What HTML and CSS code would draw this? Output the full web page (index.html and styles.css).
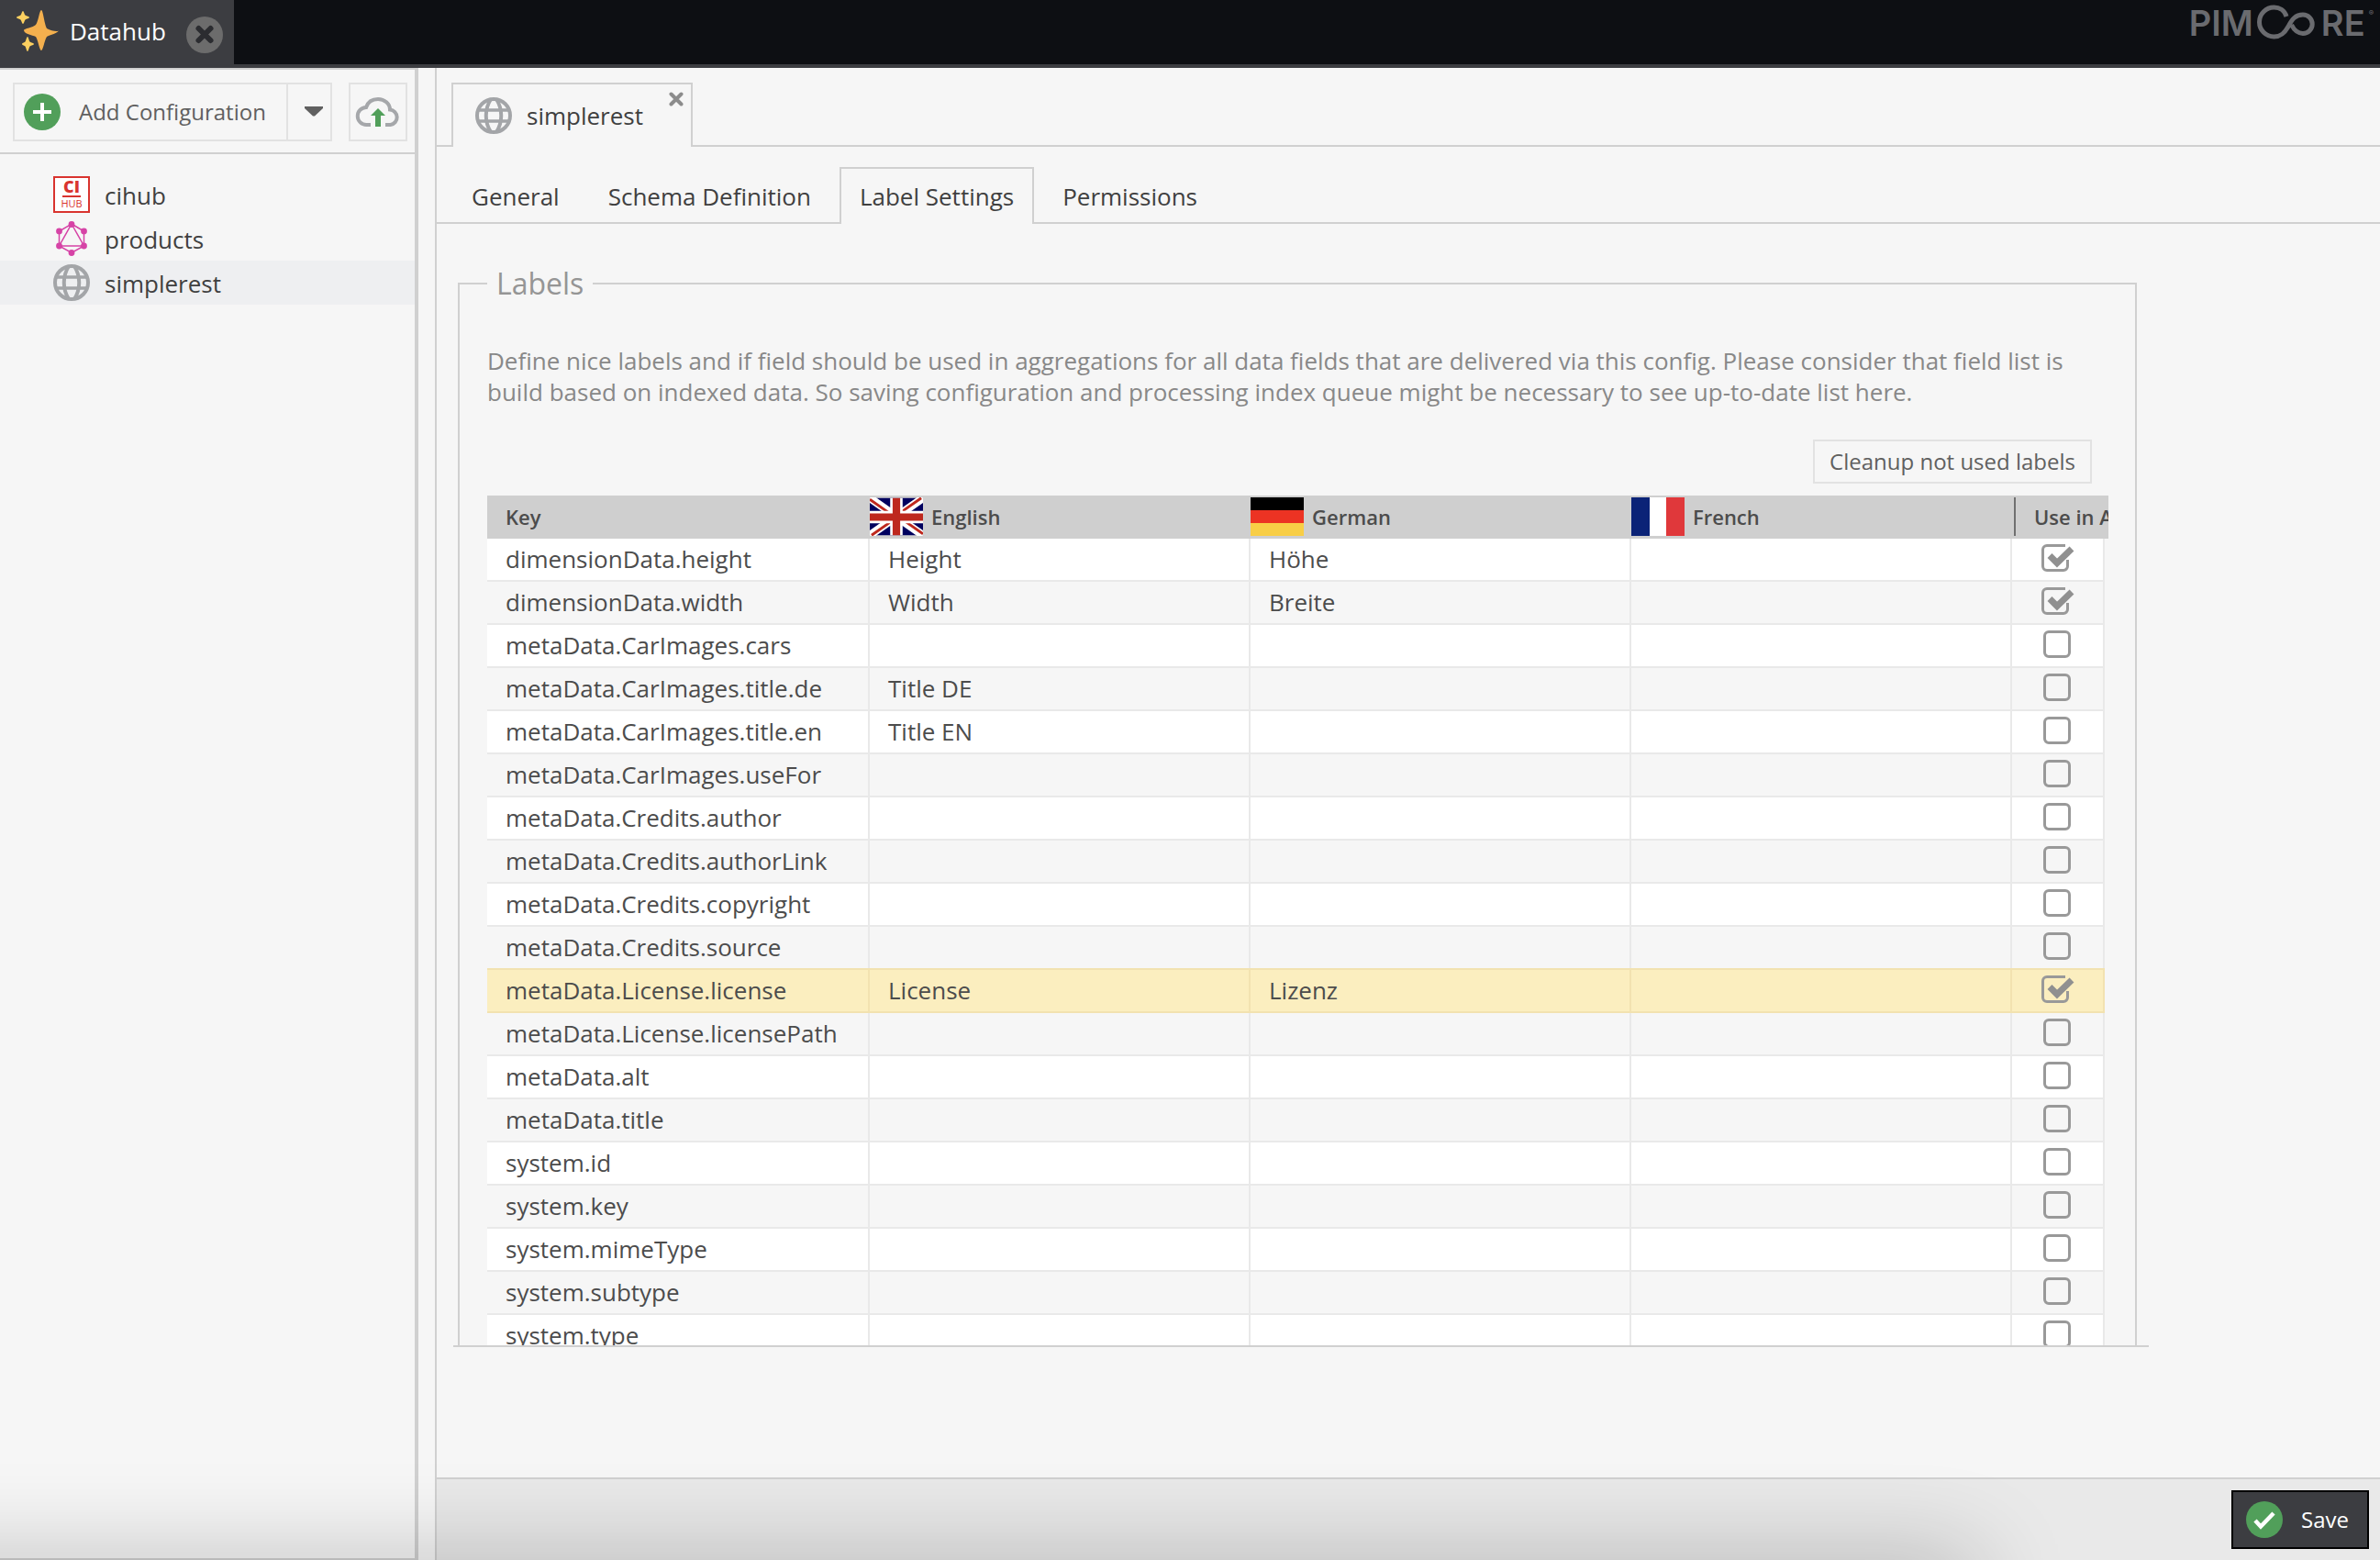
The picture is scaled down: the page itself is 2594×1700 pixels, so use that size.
FILE: index.html
```html
<!DOCTYPE html>
<html lang="en">
<head>
<meta charset="utf-8">
<title>Datahub</title>
<link rel="stylesheet" href="styles.css">
</head>
<body>
<svg width="0" height="0" class="defs" aria-hidden="true">
  <symbol id="globe" viewBox="0 0 40 40">
    <g fill="none" stroke="#a3a5a8" stroke-width="4">
      <circle cx="20" cy="20" r="18"/>
      <path d="M3 14H37M3 26H37" stroke-width="3.6"/>
      <path d="M17 2C10 13 10 27 17 38M23 2C30 13 30 27 23 38"/>
    </g>
  </symbol>
  <symbol id="gb" viewBox="0 0 60 42">
    <path fill="#00005f" d="M0 0H60V42H0z"/>
    <path stroke="#fff" stroke-width="9" d="M0 0L60 42M60 0L0 42"/>
    <path stroke="#be281e" stroke-width="3" d="M0 1.500L22 17M60 40.500L38 25M58 0L36 15.500M2 42L24 26.500"/>
    <path stroke="#fff" stroke-width="14" d="M30 0V42M0 21.500H60"/>
    <path stroke="#be281e" stroke-width="8.500" d="M30 0V42M0 21.500H60"/>
  </symbol>
</svg>
<header class="topbar">
  <div class="apptab">
    <svg class="sparkles" viewBox="0 0 56 56" aria-hidden="true">
      <path fill="#f4b04e" d="M36 4C38 4 39 18 42 24C47 27 55 28 55 26C55 29 45 31 42 33C39 38 38 48 36 48C34 48 33 38 30 33C26 31 17 30 17 26C17 24 27 23 30 20C33 16 34 4 36 4z"/>
      <path fill="#fcd060" d="M16 5C17 5 17.500 9 18.500 9.500C20 10.500 23 11 23 12C23 13 20 13.500 18.500 14.500C17.500 16 17 19 16 19C15 19 14.500 16 13.500 14.500C12 13.500 9 13 9 12C9 11 12 10.500 13.500 9.500C14.500 8 15 5 16 5zM21 33C22 33 22.500 37.500 23.500 38.500C25 39.500 28 40 28 41C28 42 25 42.500 23.500 43.500C22.500 45 22 49 21 49C20 49 19.500 45 18.500 43.500C17 42.500 15 42 15 41C15 40 17 39.500 18.500 38.500C19.500 37 20 33 21 33z"/>
    </svg>
    <span class="apptab-title">Datahub</span>
    <button class="icon-btn" type="button" aria-label="Close">
      <svg width="40" height="40" viewBox="0 0 40 40"><circle cx="20" cy="20" r="20" fill="#6c6c6c"/><path d="M13.500 13L26.500 26M26.500 13L13.500 26" stroke="#2b2c30" stroke-width="6" stroke-linecap="round"/></svg>
    </button>
  </div>
  <div class="logo"><span>PIM</span><svg width="66" height="40" viewBox="0 0 66 40" aria-hidden="true"><path d="M33 14C31 7 25 4 19.500 4A16 16 0 1 0 19.500 36C27 36 31 32 35 25C39 17 43 12 51 12A10.200 10.200 0 1 1 51 32.400C45 32.400 41 28 38.500 23" transform="translate(-1 -1)" fill="none" stroke="#6a6b6f" stroke-width="5"/></svg><span>RE</span><sup>®</sup></div>
</header>
<div class="workspace">
  <aside class="sidebar">
    <div class="toolbar">
      <div class="split">
        <button class="btn add" type="button"><svg width="40" height="40" viewBox="0 0 40 40"><circle cx="20" cy="20" r="20" fill="#519f5a"/><path d="M20 10V30M10 20H30" stroke="#fff" stroke-width="4"/></svg>Add Configuration</button>
        <button class="btn caret" type="button" aria-label="More"><svg width="20" height="12" viewBox="0 0 20 12"><path d="M0 0H20V2L11 10.500H9L0 2z" fill="#606060"/></svg></button>
      </div>
      <button class="btn upload" type="button" aria-label="Import"><svg width="60" height="60" viewBox="382 92 60 60"><path d="M404 136H399.500A9.500 9.500 0 0 1 399 117C401 111 406 108 412 108C419 108 425 113 425 119.500A8.300 8.300 0 0 1 425.500 136H420" fill="none" stroke="#a5a7aa" stroke-width="4"/><path d="M412 118L420 126H415V138H409V126H404z" fill="#519f5a"/></svg></button>
    </div>
    <ul class="tree">
      <li><svg width="40" height="40" viewBox="0 0 40 40"><rect x="1" y="1" width="38" height="38" fill="#fff" stroke="#d9342f" stroke-width="2"/><text x="20" y="18" text-anchor="middle" class="ci">CI</text><path d="M10 22H30" stroke="#d9342f" stroke-width="2"/><text x="20" y="34" text-anchor="middle" class="hub">HUB</text></svg><span>cihub</span></li>
      <li><svg width="40" height="40" viewBox="0 0 40 40"><path d="M20 4L33.500 12V28L20 35.500L6.500 28V12zM20 4L33.500 28H6.500z" fill="none" stroke="#d643a6" stroke-width="1.500"/><g fill="#d643a6"><circle cx="20" cy="4.500" r="3.400"/><circle cx="33.500" cy="12" r="3.400"/><circle cx="33.500" cy="28" r="3.400"/><circle cx="20" cy="35.500" r="3.400"/><circle cx="6.500" cy="28" r="3.400"/><circle cx="6.500" cy="12" r="3.400"/></g></svg><span>products</span></li>
      <li class="selected"><svg width="40" height="40"><use href="#globe"/></svg><span>simplerest</span></li>
    </ul>
  </aside>
  <main class="main">
    <div class="tabs config-tabs">
      <div class="tab active config-tab"><svg width="40" height="40"><use href="#globe"/></svg>simplerest
        <button class="icon-btn tab-close" type="button" aria-label="Close"><svg width="16" height="16" viewBox="0 0 16 16"><path d="M2.500 2.500L13.500 13.500M13.500 2.500L2.500 13.500" stroke="#8c8c8c" stroke-width="4" stroke-linecap="round"/></svg></button>
      </div>
    </div>
    <nav class="tabs section-tabs">
      <a class="tab" href="#">General</a>
      <a class="tab" href="#">Schema Definition</a>
      <a class="tab active" href="#">Label Settings</a>
      <a class="tab" href="#">Permissions</a>
    </nav>
    <section class="panel">
      <fieldset>
        <legend>Labels</legend>
        <p class="hint">Define nice labels and if field should be used in aggregations for all data fields that are delivered via this config. Please consider that field list is build based on indexed data. So saving configuration and processing index queue might be necessary to see up-to-date list here.</p>
        <div class="actions"><button class="btn cleanup" type="button">Cleanup not used labels</button></div>
        <div class="grid">
          <table>
            <colgroup><col class="c-key"><col class="c-lang"><col class="c-lang"><col class="c-lang"><col class="c-use"></colgroup>
            <thead><tr>
              <th>Key</th>
              <th><span class="lang"><svg width="58" height="42" preserveAspectRatio="none"><use href="#gb"/></svg>English</span></th>
              <th><span class="lang"><svg width="58" height="42"><path d="M0 0H58V14H0z"/><path fill="#ec3323" d="M0 14H58V28H0z"/><path fill="#f8ce46" d="M0 28H58V42H0z"/></svg>German</span></th>
              <th><span class="lang"><svg width="58" height="42"><path fill="#0b2377" d="M0 0H20V42H0z"/><path fill="#fff" d="M20 0H38V42H20z"/><path fill="#e0383b" d="M38 0H58V42H38z"/></svg>French</span></th>
              <th id="use">Use in Aggregation</th>
            </tr></thead>
            <tbody>
              <tr><td id="k1">dimensionData.height</td><td>Height</td><td>Höhe</td><td></td><td><input type="checkbox" aria-labelledby="k1 use" checked></td></tr>
              <tr><td id="k2">dimensionData.width</td><td>Width</td><td>Breite</td><td></td><td><input type="checkbox" aria-labelledby="k2 use" checked></td></tr>
              <tr><td id="k3">metaData.CarImages.cars</td><td></td><td></td><td></td><td><input type="checkbox" aria-labelledby="k3 use"></td></tr>
              <tr><td id="k4">metaData.CarImages.title.de</td><td>Title DE</td><td></td><td></td><td><input type="checkbox" aria-labelledby="k4 use"></td></tr>
              <tr><td id="k5">metaData.CarImages.title.en</td><td>Title EN</td><td></td><td></td><td><input type="checkbox" aria-labelledby="k5 use"></td></tr>
              <tr><td id="k6">metaData.CarImages.useFor</td><td></td><td></td><td></td><td><input type="checkbox" aria-labelledby="k6 use"></td></tr>
              <tr><td id="k7">metaData.Credits.author</td><td></td><td></td><td></td><td><input type="checkbox" aria-labelledby="k7 use"></td></tr>
              <tr><td id="k8">metaData.Credits.authorLink</td><td></td><td></td><td></td><td><input type="checkbox" aria-labelledby="k8 use"></td></tr>
              <tr><td id="k9">metaData.Credits.copyright</td><td></td><td></td><td></td><td><input type="checkbox" aria-labelledby="k9 use"></td></tr>
              <tr><td id="k10">metaData.Credits.source</td><td></td><td></td><td></td><td><input type="checkbox" aria-labelledby="k10 use"></td></tr>
              <tr class="picked"><td id="k11">metaData.License.license</td><td>License</td><td>Lizenz</td><td></td><td><input type="checkbox" aria-labelledby="k11 use" checked></td></tr>
              <tr><td id="k12">metaData.License.licensePath</td><td></td><td></td><td></td><td><input type="checkbox" aria-labelledby="k12 use"></td></tr>
              <tr><td id="k13">metaData.alt</td><td></td><td></td><td></td><td><input type="checkbox" aria-labelledby="k13 use"></td></tr>
              <tr><td id="k14">metaData.title</td><td></td><td></td><td></td><td><input type="checkbox" aria-labelledby="k14 use"></td></tr>
              <tr><td id="k15">system.id</td><td></td><td></td><td></td><td><input type="checkbox" aria-labelledby="k15 use"></td></tr>
              <tr><td id="k16">system.key</td><td></td><td></td><td></td><td><input type="checkbox" aria-labelledby="k16 use"></td></tr>
              <tr><td id="k17">system.mimeType</td><td></td><td></td><td></td><td><input type="checkbox" aria-labelledby="k17 use"></td></tr>
              <tr><td id="k18">system.subtype</td><td></td><td></td><td></td><td><input type="checkbox" aria-labelledby="k18 use"></td></tr>
              <tr><td id="k19">system.type</td><td></td><td></td><td></td><td><input type="checkbox" aria-labelledby="k19 use"></td></tr>
            </tbody>
          </table>
        </div>
      </fieldset>
    </section>
    <footer class="footer">
      <button class="save" type="button"><svg width="40" height="40" viewBox="0 0 40 40"><circle cx="20" cy="20" r="20" fill="#519f5a"/><path d="M10 21L16 27.500L30 13" fill="none" stroke="#fff" stroke-width="4.500"/></svg>Save</button>
    </footer>
  </main>
</div>
</body>
</html>
```
FILE: styles.css
```css
* { box-sizing: border-box; }
body {
  margin: 0;
  height: 100vh;
  display: flex;
  flex-direction: column;
  overflow: hidden;
  position: relative;
  background: #f6f6f6;
  color: #404040;
  font: 26px/36px "Open Sans", sans-serif;
}
/* soft shade along the lower edge of the window */
body::after {
  content: "";
  position: absolute;
  left: -200px;
  right: 440px;
  bottom: -60px;
  height: 60px;
  box-shadow: 0 0 100px rgba(0, 0, 0, .28);
  pointer-events: none;
}
button { font: inherit; color: inherit; margin: 0; cursor: pointer; }
svg { display: block; flex: none; }
.defs { position: absolute; }
.icon-btn { border: 0; padding: 0; background: none; }

.topbar {
  height: 74px;
  flex: none;
  display: flex;
  justify-content: space-between;
  background: #0d0f13;
  border-bottom: 4px solid #3c3d41;
}
.apptab {
  display: flex;
  align-items: center;
  padding: 0 12px 0 9px;
  background: #3c3d41;
  color: #fff;
}
.sparkles { width: 56px; height: 56px; }
.apptab-title { padding: 0 22px 2px 11px; }
.apptab .icon-btn { padding-top: 6px; }
.logo {
  display: flex;
  align-items: flex-start;
  gap: 4px;
  padding: 5px 7px 0 0;
  color: #6a6b6f;
  font: 600 38px/40px "Inter", sans-serif;
}
.logo sup { font-size: 8px; line-height: 18px; }

.workspace { flex: 1; min-height: 0; display: flex; gap: 18px; }
.sidebar {
  width: 456px;
  flex: none;
  border: solid #d0d0d0;
  border-width: 2px 4px 2px 0;
}
.toolbar {
  display: flex;
  gap: 18px;
  padding: 14px 8px 12px 14px;
  border-bottom: 2px solid #d0d0d0;
}
.split { flex: 1; display: flex; }
.btn {
  display: flex;
  align-items: center;
  border: 2px solid #e2e2e2;
  background: #f6f6f6;
  color: #606060;
  font-size: 24px;
  padding: 0;
}
.add { flex: 1; height: 64px; gap: 20px; padding-left: 10px; white-space: nowrap; }
.caret { width: 48px; padding-left: 18px; border-left: 0; }
.upload { width: 64px; height: 64px; }
.tree { list-style: none; margin: 0; padding: 20px 0; }
.tree li {
  display: flex;
  align-items: center;
  gap: 16px;
  height: 48px;
  padding-left: 58px;
}
.tree span { padding-top: 2px; }
.tree .selected { background: #eeeff1; }
.ci { font: 800 18px "Open Sans", sans-serif; fill: #d9342f; }
.hub { font: 11px "Open Sans", sans-serif; fill: #d9342f; }

.main {
  flex: 1;
  min-width: 0;
  display: flex;
  flex-direction: column;
  border-left: 2px solid #d0d0d0;
}
.tabs { display: flex; align-items: flex-end; padding-left: 16px; border-bottom: 2px solid #d0d0d0; }
.tab {
  display: flex;
  align-items: center;
  border: 2px solid transparent;
  border-bottom: 0;
  padding: 0 20px;
  color: #404040;
  text-decoration: none;
}
.tab.active { border-color: #d0d0d0; background: #f6f6f6; margin-bottom: -2px; }
.config-tabs { padding-top: 16px; }
.config-tab { position: relative; height: 70px; gap: 16px; padding: 0 52px 0 24px; }
.tab-close { position: absolute; top: 8px; right: 8px; }
.section-tabs { height: 84px; gap: 9px; }
.section-tabs .tab { height: 60px; padding-top: 2px; }
.section-tabs .active { height: 62px; padding-top: 0; }

.panel {
  flex: 1;
  min-height: 0;
  max-width: 1848px;
  margin: 0 18px 142px;
  padding: 43px 13px 0 5px;
  overflow: hidden;
  border-bottom: 2px solid #d0d0d0;
}
fieldset { min-width: 0; margin: 0; padding: 45px 29px 30px 30px; border: 2px solid #d0d0d0; }
legend { padding: 0 10px; font-size: 32px; line-height: 44px; color: #959595; }
.hint { margin: 0; line-height: 34px; color: #888; }
.actions { display: flex; justify-content: flex-end; padding: 35px 18px 13px 0; }
.cleanup { height: 48px; padding: 0 16px; }
.grid { overflow: hidden; padding-right: 4px; }
table { width: 100%; table-layout: fixed; border-collapse: separate; border-spacing: 0; color: #4c4c4c; }
.c-key { width: 417px; }
.c-use { width: 101px; }
th {
  height: 47px;
  padding: 2px 0 3px 20px;
  background: #cfcfcf;
  text-align: left;
  font-size: 22px;
  font-weight: 600;
  line-height: 30px;
  white-space: nowrap;
}
th:has(.lang) { padding-left: 0; }
th:last-child { padding-left: 24px; box-shadow: 4px 0 #cfcfcf; background: linear-gradient(#707070, #707070) 2px 2px / 2px 42px no-repeat #cfcfcf; }
.lang { display: flex; align-items: center; gap: 9px; }
td {
  height: 47px;
  padding: 0 0 2px 20px;
  background: #fff;
  border-right: 2px solid #e9e9e9;
  border-bottom: 2px solid #e9e9e9;
  white-space: nowrap;
}
tr:nth-child(even) td { background: #f6f6f6; }
tr.picked td { background: #fbeebf; border-color: #f2e2b0; box-shadow: 0 -2px #f2e2b0; }
td:last-child { padding: 0; }
input[type="checkbox"] {
  appearance: none;
  display: block;
  width: 38px;
  height: 30px;
  margin: 0 auto 4px;
  background: url("data:image/svg+xml,%3Csvg xmlns='http://www.w3.org/2000/svg' width='38' height='30'%3E%3Crect x='4.500' y='1.500' width='27' height='27' rx='4.500' fill='none' stroke='%23999' stroke-width='3'/%3E%3C/svg%3E") no-repeat;
}
input[type="checkbox"]:checked {
  background-image: url("data:image/svg+xml,%3Csvg xmlns='http://www.w3.org/2000/svg' width='38' height='30'%3E%3Cpath d='M27 1.500H7A4.500 4.500 0 0 0 2.500 6V24A4.500 4.500 0 0 0 7 28.500H25A4.500 4.500 0 0 0 29.500 24V17' fill='none' stroke='%23999' stroke-width='3'/%3E%3Cpath d='M10 12.500L18 20.500L34 5' fill='none' stroke='%23909090' stroke-width='7'/%3E%3C/svg%3E");
}

.footer {
  flex: none;
  display: flex;
  justify-content: flex-end;
  padding: 12px;
  border-top: 2px solid #d0d0d0;
  background: #e9e9e9;
}
.save {
  display: flex;
  align-items: center;
  gap: 20px;
  height: 64px;
  padding: 0 20px 0 14px;
  border: 2px solid #000;
  background: #3c3d41;
  color: #fff;
  font-size: 24px;
}
```
